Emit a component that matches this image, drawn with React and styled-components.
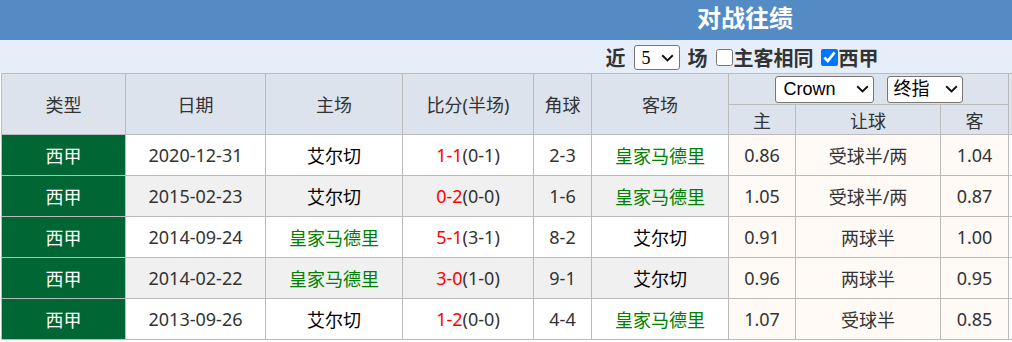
import React from 'react';
import styled, { createGlobalStyle } from 'styled-components';

const GlobalStyle = createGlobalStyle`
  html, body {
    margin: 0;
    padding: 0;
    overflow: hidden;
    background: #fff;
  }
  body {
    font-family: "Noto Sans", "Noto Sans CJK SC", sans-serif;
    color: #333;
  }
`;

const matches = [
  { date: '2020-12-31', home: '艾尔切', score: '1-1', half: '(0-1)', corner: '2-3', away: '皇家马德里', h: '0.86', line: '受球半/两', a: '1.04' },
  { date: '2015-02-23', home: '艾尔切', score: '0-2', half: '(0-0)', corner: '1-6', away: '皇家马德里', h: '1.05', line: '受球半/两', a: '0.87' },
  { date: '2014-09-24', home: '皇家马德里', score: '5-1', half: '(3-1)', corner: '8-2', away: '艾尔切', h: '0.91', line: '两球半', a: '1.00' },
  { date: '2014-02-22', home: '皇家马德里', score: '3-0', half: '(1-0)', corner: '9-1', away: '艾尔切', h: '0.96', line: '两球半', a: '0.95' },
  { date: '2013-09-26', home: '艾尔切', score: '1-2', half: '(0-0)', corner: '4-4', away: '皇家马德里', h: '1.07', line: '受球半', a: '0.85' },
];

const colWidths = [124, 140, 137, 131, 58, 137, 67, 145, 68, 300];

const Page = styled.div`
  width: 1490px;
`;

const TitleBar = styled.div`
  height: 40px;
  line-height: 36px;
  background: #558bc5;
  color: #fff;
  text-align: center;
  font-size: 24px;
  font-weight: bold;
`;

const FilterBar = styled.div`
  height: 33px;
  background: #e6eff9;
  display: flex;
  align-items: center;
  justify-content: center;
  font-size: 20px;
  font-weight: bold;
  color: #333;
  padding-top: 2px;
  padding-right: 6px;
  box-sizing: border-box;
`;

const SelectBox = styled.span`
  position: relative;
  display: inline-flex;
  margin: ${(p) => p.$margin || '0'};
`;

const NativeSelect = styled.select`
  appearance: none;
  -webkit-appearance: none;
  box-sizing: border-box;
  width: ${(p) => p.$w}px;
  height: ${(p) => p.$h}px;
  border: 1px solid #767676;
  border-radius: 3px;
  background: #fff;
  font-family: ${(p) => (p.$serif ? '"Liberation Serif", serif' : '"Liberation Sans", "Noto Sans CJK SC", sans-serif')};
  font-size: 18px;
  color: #000;
  padding: 0 0 0 ${(p) => p.$pad}px;
  outline: none;
`;

const Chevron = styled.svg`
  position: absolute;
  right: ${(p) => p.$right}px;
  top: 50%;
  width: 13px;
  height: 8px;
  margin-top: -4px;
  pointer-events: none;
`;

function Picker({ w, h, pad, right, serif, margin, value, options }) {
  return (
    <SelectBox $margin={margin}>
      <NativeSelect $w={w} $h={h} $pad={pad} $serif={serif} defaultValue={value}>
        {options.map((o) => (
          <option key={o}>{o}</option>
        ))}
      </NativeSelect>
      <Chevron $right={right} viewBox="0 0 13 8">
        <path d="M1.2 1.2 L6.5 6.4 L11.8 1.2" fill="none" stroke="#111" strokeWidth="1.9" />
      </Chevron>
    </SelectBox>
  );
}

const Check = styled.input.attrs({ type: 'checkbox' })`
  width: 17px;
  height: 17px;
  margin: 0 1px 0 ${(p) => p.$gap}px;
`;

const Table = styled.table`
  margin-left: 1px;
  border-spacing: 0;
  border-collapse: separate;
  table-layout: fixed;
  width: ${colWidths.reduce((s, w) => s + w, 0)}px;
  border-left: 1px solid #bbb;
  border-top: 1px solid #bbb;
  font-size: 18px;
`;

const Head = styled.th`
  box-sizing: border-box;
  height: ${(p) => p.$h}px;
  padding: 0;
  font-weight: normal;
  color: #333;
  background: #dce3ec;
  border-right: 1px solid #bbb;
  border-bottom: 1px solid #bbb;
  text-align: center;
  vertical-align: middle;
`;

const OddsPick = styled.div`
  display: flex;
  justify-content: center;
  gap: 13px;
`;

const cellBg = (p) => {
  if (p.$kind === 'league') return '#006633';
  if (p.$kind === 'odds') return '#fffaf6';
  if (p.$kind === 'blank') return '#fff';
  return p.$alt ? '#f0f0f0' : '#fff';
};

const Cell = styled.td`
  box-sizing: border-box;
  height: 41px;
  padding: 0;
  text-align: center;
  vertical-align: middle;
  border-right: 1px solid #bbb;
  border-bottom: 1px solid #bbb;
  background: ${cellBg};
  color: ${(p) => (p.$kind === 'league' ? '#fff' : '#333')};
  white-space: nowrap;
`;

const Team = styled.span`
  color: ${(p) => (p.$club === '皇家马德里' ? '#008000' : '#000')};
`;

const Goals = styled.span`
  color: #f00;
`;

export default function App() {
  return (
    <Page>
      <GlobalStyle />
      <TitleBar>对战往绩</TitleBar>
      <FilterBar>
        近
        <Picker w={46} h={25} pad={7} right={6} serif margin="0 8px" value="5" options={['5', '10', '20']} />
        场
        <Check $gap={8} />
        主客相同
        <Check $gap={7} defaultChecked />
        西甲
      </FilterBar>
      <Table>
        <colgroup>
          {colWidths.map((w, i) => (
            <col key={i} style={{ width: w }} />
          ))}
        </colgroup>
        <thead>
          <tr>
            <Head $h={31} rowSpan={2}>类型</Head>
            <Head $h={31} rowSpan={2}>日期</Head>
            <Head $h={31} rowSpan={2}>主场</Head>
            <Head $h={31} rowSpan={2}>比分(半场)</Head>
            <Head $h={31} rowSpan={2}>角球</Head>
            <Head $h={31} rowSpan={2}>客场</Head>
            <Head $h={31} colSpan={3}>
              <OddsPick>
                <Picker w={99} h={27} pad={8} right={5} value="Crown" options={['Crown', '澳门']} />
                <Picker w={76} h={27} pad={6} right={5} value="终指" options={['终指', '初指']} />
              </OddsPick>
            </Head>
            <Head $h={31} rowSpan={2}></Head>
          </tr>
          <tr>
            <Head $h={30}>主</Head>
            <Head $h={30}>让球</Head>
            <Head $h={30}>客</Head>
          </tr>
        </thead>
        <tbody>
          {matches.map((m, i) => {
            const alt = i % 2 === 1;
            return (
              <tr key={m.date}>
                <Cell $kind="league">西甲</Cell>
                <Cell $alt={alt}>{m.date}</Cell>
                <Cell $alt={alt}><Team $club={m.home}>{m.home}</Team></Cell>
                <Cell $alt={alt}><Goals>{m.score}</Goals>{m.half}</Cell>
                <Cell $alt={alt}>{m.corner}</Cell>
                <Cell $alt={alt}><Team $club={m.away}>{m.away}</Team></Cell>
                <Cell $kind="odds">{m.h}</Cell>
                <Cell $kind="odds">{m.line}</Cell>
                <Cell $kind="odds">{m.a}</Cell>
                <Cell $kind="blank"></Cell>
              </tr>
            );
          })}
        </tbody>
      </Table>
    </Page>
  );
}
